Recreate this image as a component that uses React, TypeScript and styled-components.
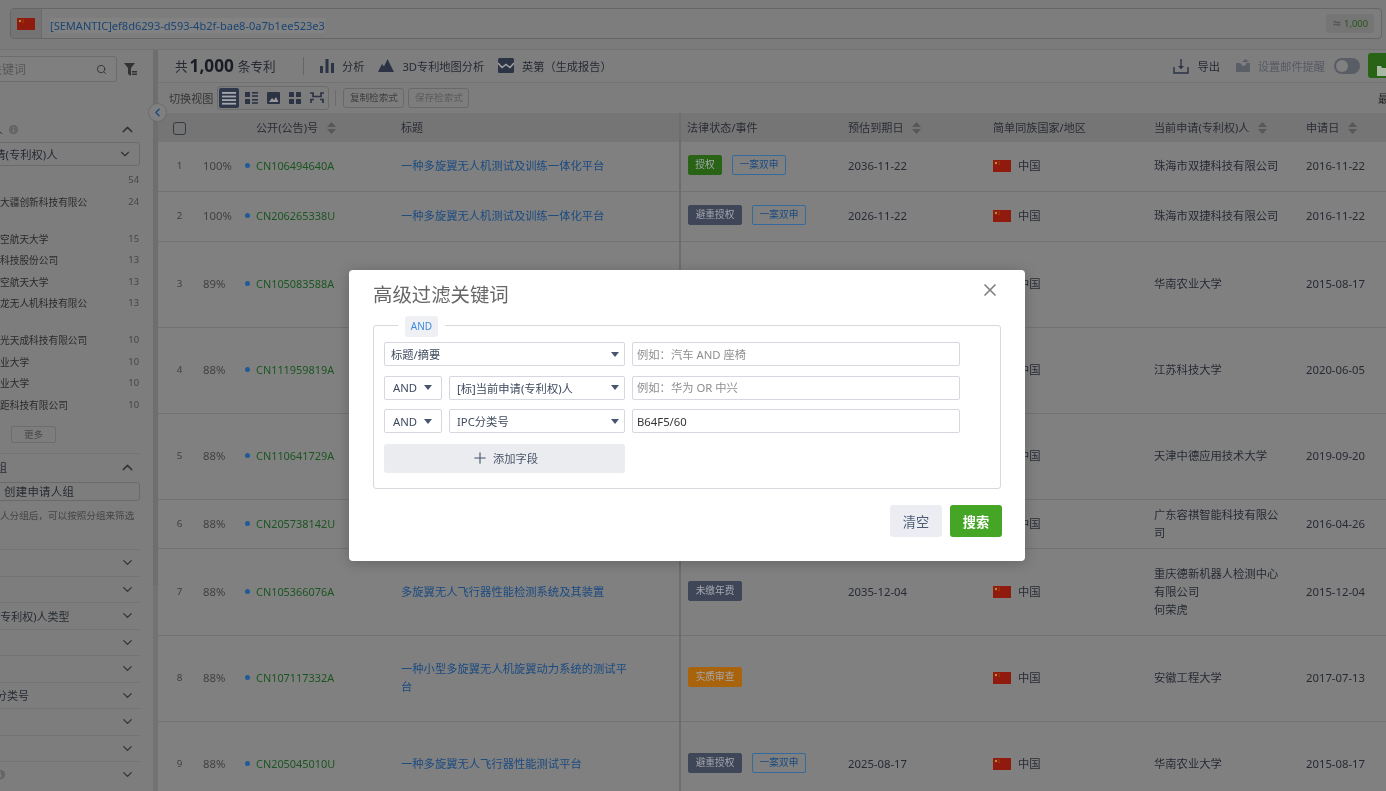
import React from "react";
import styled, { createGlobalStyle } from "styled-components";
import { Search, ChevronUp, ChevronDown, ChevronLeft, X, Plus, Info } from "lucide-react";

const Global = createGlobalStyle`
  html, body { margin: 0; padding: 0; background: #808080; }
  body { overflow: hidden; font-family: "Noto Sans", "Noto Sans CJK SC", sans-serif; color: #262a33; }
  * { box-sizing: border-box; }
`;

const Page = styled.div`
  position: relative; width: 1386px; height: 791px; overflow: hidden; background: #808080; filter: blur(.3px);
`;
const TopBar = styled.header`
  height: 50px; padding: 8px 4px 0 10px; background: #7b7b7b; border-bottom: 1px solid #727272;
`;
const QueryBox = styled.div`
  height: 31px; display: flex; align-items: center; border: 1px solid #666; border-radius: 4px; background: #7d7d7d;
`;
const FlagCell = styled.div`
  width: 31px; height: 100%; display: flex; align-items: center; justify-content: center;
  background: #747474; border-right: 1px solid #6a6a6a; border-radius: 3px 0 0 3px;
`;
const QueryWrap = styled.div`flex: 1; margin-left: 8px;`;
const QueryText = styled.span`
  font-size: 11.05px; color: #1a4474; background: #828282;
`;
const CountBadge = styled.span`
  margin-right: 7px; padding: 2px 6px; height: 19px; line-height: 15px; border-radius: 3px; background: #757575;
  font-size: 9.4px; color: #265619;
  i { font-style: normal; color: #444; }
`;
const Main = styled.div`display: flex; height: 741px;`;
const Sidebar = styled.aside`
  width: 153px; overflow: hidden; background: #7d7d7d; flex: none;
`;
const SideInner = styled.div`
  width: 200px; margin-left: -60px; padding-top: 6px;
`;
const FilterRow = styled.div`
  display: flex; align-items: center; gap: 7px; margin-bottom: 35px; width: 206px;
`;
const FilterInput = styled.div`
  width: 177px; height: 26px; display: flex; align-items: center; justify-content: space-between;
  padding: 0 9px 0 49px; border: 1px solid #6c6c6c; border-radius: 3px; background: #7f7f7f;
  font-size: 12px; color: #575757;
`;
const SectionHead = styled.div`
  height: 24px; margin-bottom: 1px; display: flex; align-items: center; justify-content: space-between; padding: 0 4px 0 30px; font-size: 11px; color: #262a33;
  span { display: flex; align-items: center; gap: 4px; }
`;
const FakeSelect = styled.div`
  height: 24px; display: flex; align-items: center; justify-content: space-between; padding: 0 7px 0 42px;
  border: 1px solid #6a6a6a; border-radius: 3px; font-size: 11.3px; color: #262a33; margin-bottom: 4px;
`;
const ListRow = styled.div`
  display: flex; justify-content: space-between; align-items: flex-start; padding: 3px 1px 3px 31px; min-height: 21.5px;
`;
const ListName = styled.span`
  width: 118px; font-size: 9.7px; line-height: 15.5px; color: #2a2a2a;
`;
const ListCount = styled.span`font-size: 9.4px; line-height: 14px; color: #454545;`;
const MoreButton = styled.div`
  width: 45px; height: 17px; margin: 10px 0 10px 71px; border: 1px solid #6d6d6d; border-radius: 2px;
  font-size: 9.6px; line-height: 15px; text-align: center; color: #464646;
`;
const Hairline = styled.div`height: 1px; background: #747474;`;
const GroupHead = styled(SectionHead)`height: 26px; margin-bottom: 0; padding-left: 23px;`;
const GroupBox = styled.div`
  height: 19px; margin-top: 2px; padding-left: 63px; border: 1px solid #6a6a6a; border-radius: 3px; font-size: 11.4px; line-height: 17px; letter-spacing: .3px; color: #262a33;
`;
const GroupHint = styled.div`
  margin: 8px 0 26px; padding-left: 60px; font-size: 9.6px; line-height: 14px; white-space: nowrap; color: #454545;
`;
const Collapsed = styled.div`
  height: 26.5px; display: flex; align-items: center; justify-content: space-between; padding: 0 5px 0 35px;
  border-top: 1px solid #747474; font-size: 11px; color: #262a33;
  span { display: flex; align-items: center; }
`;
const Track = styled.div`width: 5px; flex: none; background: #727272; margin-right: 0;`;
const Thumb = styled.div`width: 5px; height: 535px; background: #6e6e6e;`;
const Content = styled.section`flex: 1; min-width: 0; overflow: hidden;`;
const ToolBar = styled.div`
  height: 33px; display: flex; align-items: center; padding: 0 0 1px 17px; background: #7e7e7e; border-bottom: 1px solid #737373; white-space: nowrap;
`;
const Total = styled.div`
  font-size: 12.6px; color: #262a33; display: flex; align-items: center; gap: 4px; width: 129px; height: 18px; border-right: 1px solid #666; margin-right: 16px;
  b { font-size: 17.2px; color: #191c24; font-weight: 700; margin-left: -2px; }
`;
const ToolItem = styled.div<{ $muted?: boolean; $gap?: number }>`
  display: flex; align-items: center; gap: 8px; font-size: 11.2px; margin-right: ${(p) => p.$gap ?? 14}px;
  color: ${(p) => (p.$muted ? "#565a63" : "#262a33")};
`;
const Spacer = styled.div`flex: 1;`;
const Toggle = styled.div`
  width: 26px; height: 16px; border-radius: 8px; background: #595d66; padding: 2px; margin-right: 8px;
  &::before { content: ""; display: block; width: 12px; height: 12px; border-radius: 50%; background: #808080; }
`;
const GreenEdge = styled.div`
  width: 30px; height: 25px; border-radius: 3px 0 0 3px; background: #286316; padding: 6px 0 0 9px; margin-right: -12px;
`;
const ViewBar = styled.div`
  height: 30px; display: flex; align-items: center; padding-left: 11px; background: #7d7d7d; font-size: 11.1px; color: #363636; white-space: nowrap;
`;
const ViewGroup = styled.div`
  display: flex; align-items: center; gap: 2px; margin-left: 4px; padding: 1px; height: 24px; border: 1px solid #6b6b6b; border-radius: 3px;
`;
const ViewBtn = styled.div<{ $on?: boolean }>`
  width: 20px; height: 20px; border-radius: 2px; display: flex; align-items: center; justify-content: center;
  background: ${(p) => (p.$on ? "#2f384a" : "transparent")};
`;
const VSep = styled.div`width: 1px; height: 16px; background: #6c6c6c; margin: 0 7px 0 6px;`;
const GhostBtn = styled.div<{ $dim?: boolean }>`
  width: 61px; height: 20px; margin-right: 4px; border: 1px solid #696969; border-radius: 3px; text-align: center;
  font-size: 9.6px; line-height: 18px; color: ${(p) => (p.$dim ? "#5c5c5c" : "#3f3f3f")};
`;
const LastLabel = styled.span`margin-left: auto; font-size: 11px; color: #222; width: 8px; overflow: hidden;`;
const Table = styled.table`
  width: 1228px; table-layout: fixed; border-collapse: collapse; background: #808080;
`;
const HeadRow = styled.tr`height: 29px; background: #757575;`;
const Th = styled.th<{ $line?: boolean }>`
  padding: 0 8px 2px; text-align: left; font-weight: 400; font-size: 11.1px; color: #2a2d35; white-space: nowrap;
  border-left: ${(p) => (p.$line ? "2px solid #6d6d6d" : "none")};
  padding-left: ${(p) => (p.$line ? "6px" : "8px")};
`;
const Sort = styled.svg`vertical-align: -2px; margin-left: 9px;`;
const Check = styled.span`
  display: inline-block; width: 13px; height: 13px; margin: 1px 0 0 7px; border: 1px solid #333945; border-radius: 3px; vertical-align: middle;
`;
const Tr = styled.tr<{ $h: number }>`height: ${(p) => p.$h}px; border-bottom: 1px solid #727272;`;
const Td = styled.td<{ $line?: boolean }>`
  padding: 0 8px; font-size: 11.3px; line-height: 18px; color: #262a33;
  border-left: ${(p) => (p.$line ? "2px solid #6d6d6d" : "none")};
  padding-left: ${(p) => (p.$line ? "7px" : "8px")};
`;
const IdxCell = styled(Td)`padding: 0 0 0 0; text-align: center; padding-right: 1px; font-size: 9.8px; color: #404040;`;
const PctCell = styled(Td)`padding: 0 0 0 1px; color: #404040;`;
const PubCell = styled(Td)`padding-left: 3px; font-size: 10.9px; color: #1a5520;`;
const Dot = styled.i`
  display: inline-block; width: 5px; height: 5px; border-radius: 50%; background: #215a96; margin-right: 6px; vertical-align: 2px;
`;
const TitleLink = styled.div`max-width: 235px; color: #1a4a80;`;
const AppName = styled.div`max-width: 128px;`;
const Tags = styled.div`display: flex; gap: 10px; margin-top: -2px;`;
const Tag = styled.span<{ $bg?: string; $w: number }>`
  display: block; width: ${(p) => p.$w}px; height: 20px; border-radius: 2px; text-align: center; font-size: 9.7px; line-height: 18px;
  background: ${(p) => p.$bg ?? "transparent"};
  color: ${(p) => (p.$bg ? "#a5a8ae" : "#1a4a80")};
  border: 1px solid ${(p) => p.$bg ?? "#356a9e"};
`;
const CountryWrap = styled.div`display: flex; align-items: center; gap: 7px;`;
const CollapseBtn = styled.div`
  position: absolute; left: 148px; top: 103px; width: 19px; height: 19px; border-radius: 50%; background: #7f7f7f; border: 1px solid #6c6c6c;
  display: flex; align-items: center; justify-content: center; color: #1a4a80;
`;
const Dialog = styled.div`
  position: absolute; left: 349px; top: 270px; width: 676px; height: 291px; padding: 0 24px; background: #fff; border-radius: 4px;
  box-shadow: 0 2px 14px rgba(0,0,0,.22);
`;
const DialogHead = styled.div`
  height: 55px; padding: 11px 0 0 0; display: flex; justify-content: space-between; font-size: 19.4px; line-height: 27px; color: #666;
`;
const CloseIcon = styled(X)`margin: -1px 1px 0 0; color: #808080;`;
const Field = styled.div`
  position: relative; height: 164px; padding: 16px 0 0 10px; border: 1px solid #d7d9de; border-radius: 3px; display: flex; flex-direction: column; gap: 9.6px;
`;
const Legend = styled.div`
  position: absolute; left: 24px; top: -10px; padding: 0 7px; background: #fff;
  span { display: block; width: 33px; height: 21px; border-radius: 3px; background: #eef0f4; font-size: 10px; line-height: 21px; text-align: center; color: #3d8be0; }
`;
const Row = styled.div`display: flex; gap: 7px; align-items: center; height: 24px;`;
const Sel = styled.div<{ $w: number; $pl: number; $pr: number }>`
  width: ${(p) => p.$w}px; height: 24px; display: flex; align-items: center; justify-content: space-between;
  padding: 0 ${(p) => p.$pr}px 0 ${(p) => p.$pl}px; flex: none;
  border: 1px solid #d5d8de; border-radius: 2px; font-size: 11.3px; color: #3f4a5e; white-space: nowrap;
  &::after { content: ""; border: 4.5px solid transparent; border-top: 5px solid #47556e; border-bottom: 0; }
`;
const TextIn = styled.input`
  width: 328px; height: 24px; padding: 0 4px; border: 1px solid #d5d8de; border-radius: 2px; outline: none; font: inherit; font-size: 11.3px; color: #333;
  &::placeholder { color: #8e8e8e; opacity: 1; }
`;
const AddBtn = styled.div`
  width: 241px; height: 29px; margin-top: 1px; display: flex; align-items: center; justify-content: center; gap: 4px; border-radius: 3px; background: #ebecf0;
  font-size: 11.3px; color: #4a5568;
`;
const Footer = styled.div`display: flex; justify-content: flex-end; gap: 8px; margin: 16px -1px 0 0;`;
const FootBtn = styled.button<{ $primary?: boolean }>`
  width: 52px; height: 32px; border: none; border-radius: 3px; font: inherit; font-size: 13.2px;
  font-weight: ${(p) => (p.$primary ? 700 : 400)};
  background: ${(p) => (p.$primary ? "#45a524" : "#ebedf2")};
  color: ${(p) => (p.$primary ? "#fff" : "#4c5b75")};
`;

const NAVY = "#2b3344";
const Flag = () => (
  <svg width="18" height="12" viewBox="0 0 18 12">
    <rect width="18" height="12" fill="#8f1a0d" />
    <circle cx="3" cy="3" r="1.2" fill="#b9932a" />
    <circle cx="6" cy="1.6" r=".4" fill="#b9932a" /><circle cx="6.6" cy="3" r=".4" fill="#b9932a" /><circle cx="6" cy="4.5" r=".4" fill="#b9932a" />
  </svg>
);
const SortIcon = () => (
  <Sort width="9" height="12" viewBox="0 0 9 12"><path d="M4.5 0 9 5H0zM4.5 12 0 7h9z" fill="#585858" /></Sort>
);
const BarsIcon = () => (
  <svg width="14" height="14" viewBox="0 0 14 14" fill={NAVY}><rect x="0" y="7" width="3" height="7" /><rect x="5.5" y="0" width="3" height="14" /><rect x="11" y="4" width="3" height="10" /></svg>
);
const MountainIcon = () => (
  <svg width="16" height="13" viewBox="0 0 16 13" fill={NAVY}><path d="M0 13 4 5l2 2.5L9.5 0 16 13z" /></svg>
);
const WaveIcon = () => (
  <svg width="16" height="15" viewBox="0 0 16 15"><rect width="16" height="15" rx="1.5" fill={NAVY} /><path d="M0 5 4 9.5 8 6.5 12 9.5 16 5" stroke="#a0a0a0" strokeWidth="1.5" fill="none" /></svg>
);
const ExportIcon = () => (
  <svg width="16" height="16" viewBox="0 0 16 16" fill="none" stroke={NAVY} strokeWidth="1.4"><path d="M1 9v6h14V9M8 1v9" /><path d="M5 8h6l-3 3.2z" fill={NAVY} stroke="none" /></svg>
);
const MailIcon = () => (
  <svg width="14" height="13" viewBox="0 0 14 13" fill="#5a5e66"><path d="M0 4h4l3 3 3-1v-2h4v9H0zM9.5 0 13 3H6z" /></svg>
);
const FolderIcon = () => (
  <svg width="12" height="11" viewBox="0 0 12 11" fill="#a9b9a4"><path d="M0 1h4l1 2h7v8H0z" /></svg>
);
const VList = ({ c = NAVY }: { c?: string }) => (
  <svg width="14" height="13" viewBox="0 0 14 13" fill={c}><rect width="14" height="1.8" /><rect y="3.6" width="14" height="1.8" /><rect y="7.2" width="14" height="1.8" /><rect y="10.8" width="14" height="1.8" /></svg>
);
const VDetail = () => (
  <svg width="13" height="12" viewBox="0 0 13 12" fill={NAVY}><rect width="5" height="5" /><rect y="7" width="5" height="5" /><rect x="7" width="6" height="1.6" /><rect x="7" y="3.2" width="6" height="1.6" /><rect x="7" y="7" width="6" height="1.6" /><rect x="7" y="10.2" width="6" height="1.6" /></svg>
);
const VImage = () => (
  <svg width="13" height="12" viewBox="0 0 13 12"><rect width="13" height="12" rx="1" fill={NAVY} /><path d="M2 10 5 6l2 2 2-3 2.5 5z" fill="#9a9a9a" /></svg>
);
const VGrid = () => (
  <svg width="12" height="12" viewBox="0 0 12 12" fill={NAVY}><rect width="5" height="5" rx=".6" /><rect x="7" width="5" height="5" rx=".6" /><rect y="7" width="5" height="5" rx=".6" /><rect x="7" y="7" width="5" height="5" rx=".6" /></svg>
);
const VTree = () => (
  <svg width="14" height="12" viewBox="0 0 14 12" fill="none" stroke={NAVY} strokeWidth="1.7"><path d="M0 1h3v3.5h8V1h3M1 11V7.5h3M13 11V7.5h-3" /></svg>
);

type Rec = { no: string; pct: string; pub: string; title: string; h: number; tags: [string, string?, number?][]; exp: string; app: string[]; date: string };
const DARK = "#3f4658";
const rows: Rec[] = [
  { no: "1", pct: "100%", pub: "CN106494640A", title: "一种多旋翼无人机测试及训练一体化平台", h: 49, tags: [["授权", "#286316", 34], ["一案双申", undefined, 54]], exp: "2036-11-22", app: ["珠海市双捷科技有限公司"], date: "2016-11-22" },
  { no: "2", pct: "100%", pub: "CN206265338U", title: "一种多旋翼无人机测试及训练一体化平台", h: 50, tags: [["避重授权", DARK, 54], ["一案双申", undefined, 54]], exp: "2026-11-22", app: ["珠海市双捷科技有限公司"], date: "2016-11-22" },
  { no: "3", pct: "89%", pub: "CN105083588A", title: "一种多旋翼无人机测试平台", h: 86, tags: [], exp: "", app: ["华南农业大学"], date: "2015-08-17" },
  { no: "4", pct: "88%", pub: "CN111959819A", title: "一种多旋翼无人机测试平台", h: 86, tags: [], exp: "", app: ["江苏科技大学"], date: "2020-06-05" },
  { no: "5", pct: "88%", pub: "CN110641729A", title: "一种多旋翼无人机测试平台", h: 86, tags: [], exp: "", app: ["天津中德应用技术大学"], date: "2019-09-20" },
  { no: "6", pct: "88%", pub: "CN205738142U", title: "一种多旋翼无人机测试平台", h: 49, tags: [], exp: "", app: ["广东容祺智能科技有限公司"], date: "2016-04-26" },
  { no: "7", pct: "88%", pub: "CN105366076A", title: "多旋翼无人飞行器性能检测系统及其装置", h: 87, tags: [["未缴年费", DARK, 54]], exp: "2035-12-04", app: ["重庆德新机器人检测中心有限公司", "何荣虎"], date: "2015-12-04" },
  { no: "8", pct: "88%", pub: "CN107117332A", title: "一种小型多旋翼无人机旋翼动力系统的测试平台", h: 86, tags: [["实质审查", "#a8630c", 54]], exp: "", app: ["安徽工程大学"], date: "2017-07-13" },
  { no: "9", pct: "88%", pub: "CN205045010U", title: "一种多旋翼无人飞行器性能测试平台", h: 86, tags: [["避重授权", DARK, 54], ["一案双申", undefined, 54]], exp: "2025-08-17", app: ["华南农业大学"], date: "2015-08-17" },
];
const owners: [string, string][] = [
  ["", "54"], ["深圳市大疆创新科技有限公司", "24"], ["北京航空航天大学", "15"], ["南方电科技股份公司", "13"], ["南京航空航天大学", "13"],
  ["深圳市龙无人机科技有限公司", "13"], ["广东省光天成科技有限公司", "10"], ["西北工业大学", "10"], ["南京工业大学", "10"], ["深圳市距科技有限公司", "10"],
];
const folded = ["", "", "申请(专利权)人类型", "", "", "LOC分类号", "", "", ""];

export default function App() {
  return (
    <Page>
      <Global />
      <TopBar>
        <QueryBox>
          <FlagCell><Flag /></FlagCell>
          <QueryWrap><QueryText>[SEMANTIC]ef8d6293-d593-4b2f-bae8-0a7b1ee523e3</QueryText></QueryWrap>
          <CountBadge><i>≈ </i>1,000</CountBadge>
        </QueryBox>
      </TopBar>
      <Main>
        <Sidebar>
          <SideInner>
            <FilterRow>
              <FilterInput>关键词<Search size={11} color="#333" /></FilterInput>
              <svg width="13" height="13" viewBox="0 0 13 13" fill="#333"><path d="M0 0h11L7 5v8L4 11V5zM8 8h5v1.4H8zM8 10.6h5V12H8z" /></svg>
            </FilterRow>
            <SectionHead><span>申请人<Info size={13} fill="#666" color="#808080" /></span><ChevronUp size={17} color="#333" /></SectionHead>
            <FakeSelect>申请(专利权)人<ChevronDown size={14} color="#333" /></FakeSelect>
            {owners.map(([n, c], i) => (
              <ListRow key={i}><ListName>{n}</ListName><ListCount>{c}</ListCount></ListRow>
            ))}
            <MoreButton>更多</MoreButton>
            <Hairline />
            <GroupHead><span>申请人组</span><ChevronUp size={17} color="#333" /></GroupHead>
            <GroupBox>创建申请人组</GroupBox>
            <GroupHint>人分组后，可以按照分组来筛选</GroupHint>
            {folded.map((f, i) => (
              <Collapsed key={i}><span>{i === 8 ? <Info size={13} fill="#666" color="#808080" style={{ marginLeft: 19 }} /> : f}</span><ChevronDown size={15} color="#333" /></Collapsed>
            ))}
          </SideInner>
        </Sidebar>
        <Track><Thumb /></Track>
        <Content>
          <ToolBar>
            <Total>共 <b>1,000</b> 条专利</Total>
            <ToolItem $gap={14}><BarsIcon />分析</ToolItem>
            <ToolItem $gap={14}><MountainIcon />3D专利地图分析</ToolItem>
            <ToolItem $gap={0}><WaveIcon />英第（生成报告）</ToolItem>
            <Spacer />
            <ToolItem $gap={16}><ExportIcon />导出</ToolItem>
            <ToolItem $muted $gap={9}><MailIcon />设置邮件提醒</ToolItem>
            <Toggle />
            <GreenEdge><FolderIcon /></GreenEdge>
          </ToolBar>
          <ViewBar>
            切换视图
            <ViewGroup>
              <ViewBtn $on><VList c="#a5a8ae" /></ViewBtn>
              <ViewBtn><VDetail /></ViewBtn>
              <ViewBtn><VImage /></ViewBtn>
              <ViewBtn><VGrid /></ViewBtn>
              <ViewBtn><VTree /></ViewBtn>
            </ViewGroup>
            <VSep />
            <GhostBtn>复制检索式</GhostBtn>
            <GhostBtn $dim>保存检索式</GhostBtn>
            <LastLabel>最</LastLabel>
          </ViewBar>
          <Table>
            <colgroup>
              <col width="44" /><col width="40" /><col width="151" /><col width="287" /><col width="160" /><col width="145" /><col width="161" /><col width="152" /><col width="88" />
            </colgroup>
            <thead>
              <HeadRow>
                <Th><Check /></Th>
                <Th />
                <Th style={{ paddingLeft: 14 }}>公开(公告)号<SortIcon /></Th>
                <Th>标题</Th>
                <Th $line>法律状态/事件</Th>
                <Th>预估到期日<SortIcon /></Th>
                <Th>简单同族国家/地区</Th>
                <Th>当前申请(专利权)人<SortIcon /></Th>
                <Th>申请日<SortIcon /></Th>
              </HeadRow>
            </thead>
            <tbody>
              {rows.map((r) => (
                <Tr key={r.no} $h={r.h}>
                  <IdxCell>{r.no}</IdxCell>
                  <PctCell>{r.pct}</PctCell>
                  <PubCell><Dot />{r.pub}</PubCell>
                  <Td><TitleLink>{r.title}</TitleLink></Td>
                  <Td $line>
                    <Tags>{r.tags.map(([t, bg, w]) => <Tag key={t} $bg={bg} $w={w ?? 54}>{t}</Tag>)}</Tags>
                  </Td>
                  <Td>{r.exp}</Td>
                  <Td><CountryWrap><Flag />中国</CountryWrap></Td>
                  <Td>{r.app.map((a) => <AppName key={a}>{a}</AppName>)}</Td>
                  <Td>{r.date}</Td>
                </Tr>
              ))}
            </tbody>
          </Table>
        </Content>
      </Main>
      <CollapseBtn><ChevronLeft size={13} strokeWidth={2.5} /></CollapseBtn>
      <Dialog>
        <DialogHead>高级过滤关键词<CloseIcon size={20} strokeWidth={2} /></DialogHead>
        <Field>
          <Legend><span>AND</span></Legend>
          <Row><Sel $w={241} $pl={6} $pr={5}>标题/摘要</Sel><TextIn placeholder="例如：汽车 AND 座椅" /></Row>
          <Row><Sel $w={58} $pl={8} $pr={9}>AND</Sel><Sel $w={176} $pl={7} $pr={5}>[标]当前申请(专利权)人</Sel><TextIn placeholder="例如：华为 OR 中兴" /></Row>
          <Row><Sel $w={58} $pl={8} $pr={9}>AND</Sel><Sel $w={176} $pl={7} $pr={5}>IPC分类号</Sel><TextIn defaultValue="B64F5/60" /></Row>
          <AddBtn><Plus size={18} strokeWidth={1.5} color="#47556e" />添加字段</AddBtn>
        </Field>
        <Footer>
          <FootBtn>清空</FootBtn>
          <FootBtn $primary>搜索</FootBtn>
        </Footer>
      </Dialog>
    </Page>
  );
}
